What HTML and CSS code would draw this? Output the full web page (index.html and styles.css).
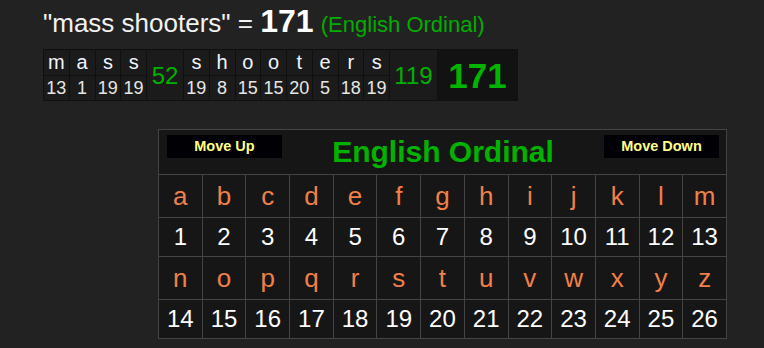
FILE: index.html
```html
<!DOCTYPE html>
<html>
<head>
<meta charset="utf-8">
<link rel="stylesheet" href="styles.css">
</head>
<body>
<div class="page">
  <div class="title"><span class="phrase">"mass shooters" = </span><span class="total">171</span> <span class="cipher">(English Ordinal)</span></div>
  <table class="breakdown">
    <tr>
      <td class="l">m</td><td class="l">a</td><td class="l">s</td><td class="l">s</td>
      <td class="sum w52" rowspan="2">52</td>
      <td class="l">s</td><td class="l">h</td><td class="l">o</td><td class="l">o</td><td class="l">t</td><td class="l">e</td><td class="l">r</td><td class="l">s</td>
      <td class="sum w119" rowspan="2">119</td>
      <td class="grand" rowspan="2">171</td>
    </tr>
    <tr>
      <td class="n">13</td><td class="n">1</td><td class="n">19</td><td class="n">19</td>
      <td class="n">19</td><td class="n">8</td><td class="n">15</td><td class="n">15</td><td class="n">20</td><td class="n">5</td><td class="n">18</td><td class="n">19</td>
    </tr>
  </table>
  <table class="chart">
    <tr>
      <td class="head" colspan="13">
        <div class="headbar">
          <button class="btn">Move Up</button>
          <span class="ctitle">English Ordinal</span>
          <button class="btn">Move Down</button>
        </div>
      </td>
    </tr>
    <tr class="letters">
      <td>a</td><td>b</td><td>c</td><td>d</td><td>e</td><td>f</td><td>g</td><td>h</td><td>i</td><td>j</td><td>k</td><td>l</td><td>m</td>
    </tr>
    <tr class="nums">
      <td>1</td><td>2</td><td>3</td><td>4</td><td>5</td><td>6</td><td>7</td><td>8</td><td>9</td><td>10</td><td>11</td><td>12</td><td>13</td>
    </tr>
    <tr class="letters">
      <td>n</td><td>o</td><td>p</td><td>q</td><td>r</td><td>s</td><td>t</td><td>u</td><td>v</td><td>w</td><td>x</td><td>y</td><td>z</td>
    </tr>
    <tr class="nums">
      <td>14</td><td>15</td><td>16</td><td>17</td><td>18</td><td>19</td><td>20</td><td>21</td><td>22</td><td>23</td><td>24</td><td>25</td><td>26</td>
    </tr>
  </table>
</div>
</body>
</html>
```

FILE: styles.css
```css
html, body {
  margin: 0;
  padding: 0;
  background: #222222;
}
body {
  font-family: "Liberation Sans", Arial, sans-serif;
  color: #eeeeee;
  height: 348px;
  overflow: hidden;
}
.page {
  padding: 5px 0 0 43px;
}
.title {
  font-size: 26px;
  line-height: 32px;
  white-space: nowrap;
  color: #f2f2f2;
}
.total {
  font-size: 32px;
  font-weight: bold;
  color: #ffffff;
}
.cipher {
  font-size: 22px;
  color: #00ad00;
}
.breakdown {
  margin-top: 8px;
  border-collapse: collapse;
  background: #1b1b1b;
}
.breakdown td {
  border: 1px solid #101010;
  padding: 0;
  text-align: center;
  white-space: nowrap;
}
.breakdown .l {
  width: 24.75px;
  height: 25px;
  font-size: 20px;
  line-height: 25px;
  color: #f0f4ff;
}
.breakdown .n {
  width: 24.75px;
  height: 24px;
  font-size: 18px;
  line-height: 24px;
  color: #e6e6e6;
}
.breakdown .sum {
  font-size: 24px;
  color: #00b000;
  padding-top: 2px;
}
.breakdown .w52 { width: 36px; }
.breakdown .w119 { width: 47px; }
.breakdown .grand {
  width: 79px;
  background: #121212;
  font-size: 35px;
  font-weight: bold;
  color: #00b400;
  padding-top: 2px;
}
.chart {
  margin: 28px 0 0 115px;
  width: 569px;
  border-collapse: collapse;
  background: #161616;
  table-layout: fixed;
}
.chart td {
  border: 1px solid #444444;
  padding: 0;
  text-align: center;
}
.chart .head {
  height: 44px;
  padding: 0 7px 0 8px;
}
.headbar {
  display: flex;
  align-items: center;
  justify-content: space-between;
}
.btn {
  width: 115px;
  height: 23px;
  background: #000005;
  border: none;
  padding: 0;
  margin: 0;
  color: #ffff88;
  font-family: "Liberation Sans", Arial, sans-serif;
  font-weight: bold;
  font-size: 14.5px;
  line-height: 23px;
  align-self: flex-start;
  margin-top: 5px;
}
.ctitle {
  font-size: 30px;
  font-weight: bold;
  color: #00b300;
  line-height: 44px;
}
.letters td {
  height: 42px;
  font-size: 26px;
  color: #f08048;
  line-height: 42px;
}
.nums td {
  height: 38px;
  font-size: 24px;
  color: #ffffff;
  line-height: 38px;
}
```
